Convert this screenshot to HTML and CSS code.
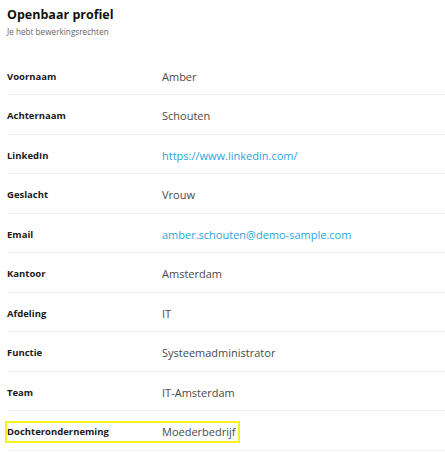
FILE: index.html
```html
<!DOCTYPE html>
<html lang="nl">
<head>
    <meta charset="UTF-8">
    <meta name="viewport" content="width=device-width, initial-scale=1.0">
    <title>Openbaar profiel</title>
    <link rel="stylesheet" href="styles.css">
</head>
<body>
    <div class="profile">
        <div class="header">
            <p class="title">Openbaar profiel</p>
            <p class="subtitle">Je hebt bewerkingsrechten</p>
        </div>
        <div class="list">
            <div class="row">
                <div class="field"><span class="label">Voornaam</span><span class="value">Amber</span></div>
            </div>
            <div class="row">
                <div class="field"><span class="label">Achternaam</span><span class="value">Schouten</span></div>
            </div>
            <div class="row">
                <div class="field"><span class="label">LinkedIn</span><a class="value link" href="#">https://www.linkedin.com/</a></div>
            </div>
            <div class="row">
                <div class="field"><span class="label">Geslacht</span><span class="value">Vrouw</span></div>
            </div>
            <div class="row">
                <div class="field"><span class="label">Email</span><a class="value link" href="#">amber.schouten@demo-sample.com</a></div>
            </div>
            <div class="row">
                <div class="field"><span class="label">Kantoor</span><span class="value">Amsterdam</span></div>
            </div>
            <div class="row">
                <div class="field"><span class="label">Afdeling</span><span class="value">IT</span></div>
            </div>
            <div class="row">
                <div class="field"><span class="label">Functie</span><span class="value">Systeemadministrator</span></div>
            </div>
            <div class="row">
                <div class="field"><span class="label">Team</span><span class="value">IT-Amsterdam</span></div>
            </div>
            <div class="row">
                <div class="field highlight"><span class="label">Dochteronderneming</span><span class="value">Moederbedrijf</span></div>
            </div>
        </div>
    </div>
</body>
</html>
```

FILE: styles.css
```css
body {
    margin: 0;
    background-color: white;
    font-family: "Open Sans", "Liberation Sans", sans-serif;
    color: #222;
}

.profile {
    padding-left: 7px;
}

.header {
    padding-top: 7px;
    height: 48.5px;
}

.title {
    margin: 0;
    font-size: 12.5px;
    font-weight: bold;
    line-height: 16px;
    color: #111;
}

.subtitle {
    margin: 3px 0 0 0;
    font-size: 8.2px;
    line-height: 12px;
    color: #666;
}

.row {
    height: 39.5px;
    display: flex;
    align-items: center;
    border-bottom: 1px solid #f1f1f1;
    box-sizing: border-box;
}

.field {
    display: inline-flex;
    align-items: center;
    height: 18px;
    margin-top: 3px;
}

.label {
    width: 155px;
    font-size: 9.5px;
    font-weight: bold;
    color: #1a1a1a;
}

.value {
    font-size: 11px;
    color: #4a4a4a;
}

.link {
    color: #2aa6dc;
    text-decoration: none;
}

.highlight {
    outline: 2px solid #f7f21a;
    padding-right: 3px;
}
```
